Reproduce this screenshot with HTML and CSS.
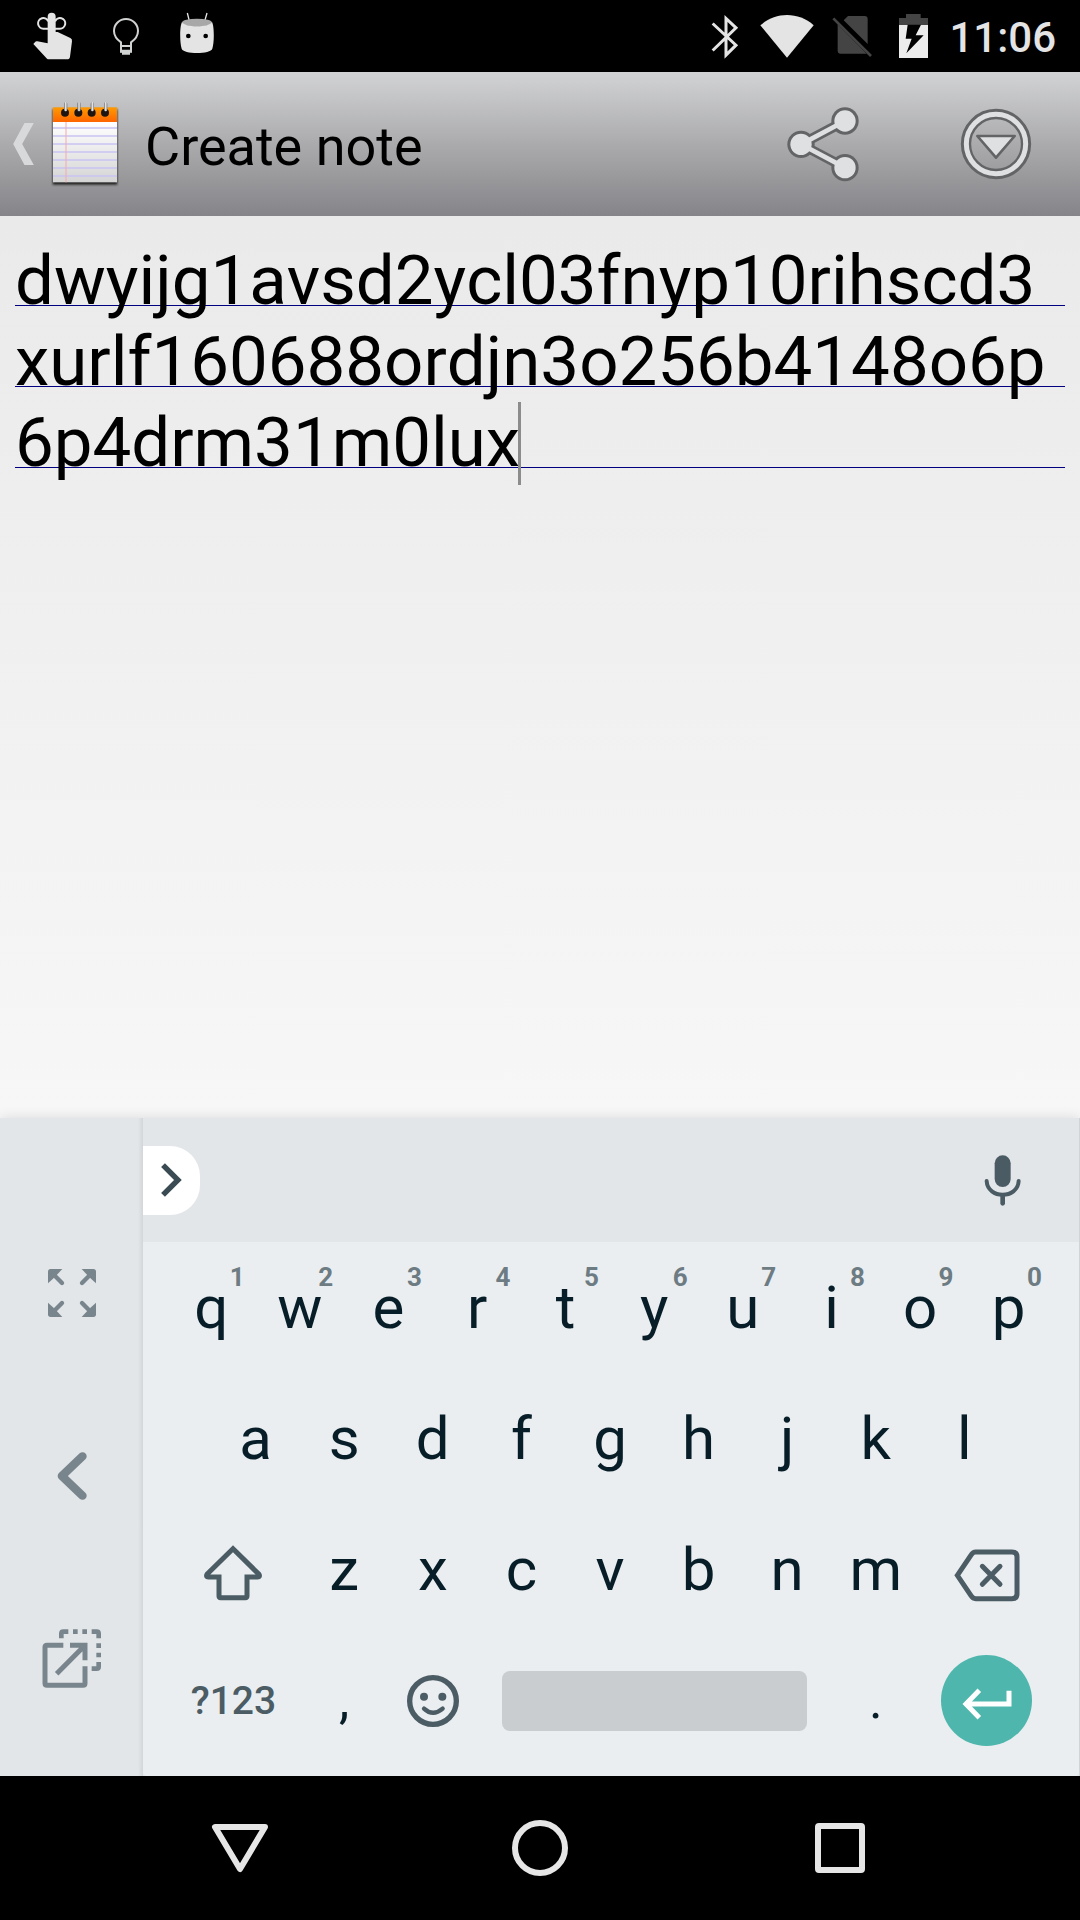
FILE: index.html
```html
<!DOCTYPE html>
<html lang="en">
<head>
<meta charset="utf-8">
<meta name="viewport" content="width=device-width, initial-scale=1">
<title>Create note</title>
<link rel="stylesheet" href="styles.css">
</head>
<body>
<div class="screen">
  <header class="status">
    <div class="status-group notices">
      <svg width="40" height="48" viewBox="0 0 120 144" aria-hidden="true"><path fill="#e4e4e4" d="M44 14a12 12 0 0 1 24 0V60h6l38 18q6 3 5 10l-6 46q-1 8-9 8H48q-4 0-6-2L1 96l6-7q2-2 6-1l31 6z"/><g fill="none" stroke="#e4e4e4" stroke-width="6"><path d="M46 50H32a16 16 0 1 1 14-22"/><path d="M66 50H80a16 16 0 1 0-14-22"/></g></svg>
      <svg width="28" height="39" viewBox="0 0 84 117" aria-hidden="true"><path fill="none" stroke="#d0d2d1" stroke-width="6" d="M27 106V76C14 67 6 55 6 42a36 36 0 0 1 72 0C78 55 70 67 57 76V106M27 87H57"/><path fill="#d0d2d1" d="M24 98H60V107H54V113H30V107H24z"/></svg>
      <svg width="36" height="42" viewBox="0 0 108 126" aria-hidden="true"><path stroke="#e4e4e4" stroke-width="4" d="M25 3l7 28M84 3l-8 28"/><ellipse cx="54" cy="32" rx="45" ry="12" fill="#a8a8a8"/><path fill="#e4e4e4" d="M9 30C2 42 2 92 8 110C12 127 96 127 100 110C106 92 106 42 99 30C94 47 14 47 9 30z"/><circle cx="28" cy="72" r="7"/><circle cx="80" cy="72" r="7"/></svg>
    </div>
    <div class="status-group system">
      <svg width="28" height="45" viewBox="0 0 84 132" aria-hidden="true"><path fill="none" stroke="#e4e4e4" stroke-width="9" d="M5 27L75 92L45 122V12L75 40L5 108"/></svg>
      <svg width="54" height="43" viewBox="0 0 160 129" aria-hidden="true"><path fill="#e4e4e4" d="M0 31C45-10 115-10 160 31L80 128z"/></svg>
      <svg width="40" height="42" viewBox="0 0 120 126" aria-hidden="true"><path fill="#444" d="M48 3H98Q107 3 107 12V87L35 16zM17 28L104 116H26Q17 116 17 107z"/><path stroke="#444" stroke-width="8" d="M4 10L117 123"/></svg>
      <svg class="battery" width="29" height="44" viewBox="0 0 87 132" aria-hidden="true"><path fill="#444" d="M21 0H65V12H87V34H0V12H21z"/><path fill="#ececec" d="M0 33H87V132H0z"/><path d="M26 32H66L50 64H74L22 118L38 74H20z"/></svg>
      <time class="clock">11:06</time>
    </div>
  </header>

  <div class="action-bar">
    <button class="up" type="button" aria-label="Back">
      <svg width="21" height="42" viewBox="0 0 62 126"><path fill="#d8d9db" d="M34 0H62L27 63L62 126H34L0 63z"/></svg>
      <svg width="68" height="88" viewBox="0 0 204 264">
        <defs>
          <linearGradient id="cover" x2="0" y2="1"><stop stop-color="#ff9a00"/><stop offset="1" stop-color="#ff6400"/></linearGradient>
          <linearGradient id="sheet" x2="0" y2="1"><stop stop-color="#fff"/><stop offset="1" stop-color="#d4d4d4"/></linearGradient>
          <linearGradient id="ring"><stop stop-color="#666"/><stop offset=".5" stop-color="#eee"/><stop offset="1" stop-color="#777"/></linearGradient>
          <filter id="soft"><feGaussianBlur stdDeviation="3"/></filter>
        </defs>
        <rect x="5" y="28" width="194" height="226" fill="#222" filter="url(#soft)"/>
        <rect x="6" y="22" width="192" height="45" fill="url(#cover)"/>
        <rect x="6" y="66" width="192" height="181" fill="url(#sheet)"/>
        <path stroke="#c8c4f4" stroke-width="5" d="M6 84H198M6 108H198M6 132H198M6 156H198M6 180H198M6 204H198M6 228H198"/>
        <path stroke="#f5a9ac" stroke-width="3" d="M45 66V247"/>
        <g fill="#1c1512"><circle cx="42" cy="38" r="12"/><circle cx="82" cy="38" r="12"/><circle cx="122" cy="38" r="12"/><circle cx="162" cy="38" r="12"/></g>
        <g fill="url(#ring)"><rect x="39" y="6" width="10" height="28" rx="5"/><rect x="79" y="6" width="10" height="28" rx="5"/><rect x="119" y="6" width="10" height="28" rx="5"/><rect x="159" y="6" width="10" height="28" rx="5"/></g>
      </svg>
    </button>
    <h1 class="title">Create note</h1>
    <button class="action" type="button" aria-label="Share">
      <svg width="72" height="77" viewBox="0 0 216 231"><g stroke="#636466" fill="#636466"><path fill="none" stroke-width="30" d="M174 45L42 115L174 185"/><circle cx="42" cy="115" r="41" stroke="none"/><circle cx="174" cy="45" r="41" stroke="none"/><circle cx="174" cy="185" r="41" stroke="none"/></g><g stroke="#dfe0e1" fill="#dfe0e1"><path fill="none" stroke-width="14" d="M174 45L42 115L174 185"/><circle cx="42" cy="115" r="32" stroke="none"/><circle cx="174" cy="45" r="32" stroke="none"/><circle cx="174" cy="185" r="32" stroke="none"/></g></svg>
    </button>
    <button class="action" type="button" aria-label="More options">
      <svg width="72" height="72" viewBox="0 0 216 216"><circle cx="108" cy="108" r="90" fill="none" stroke="#636466" stroke-width="31"/><circle cx="108" cy="108" r="89" fill="none" stroke="#dfe0e1" stroke-width="15"/><path fill="#dfe0e1" stroke="#636466" stroke-width="8" stroke-linejoin="round" d="M52 84H164L108 149z"/></svg>
    </button>
  </div>

  <main class="note">
    <textarea class="note-text" rows="3" aria-label="Note text" spellcheck="false">dwyijg1avsd2ycl03fnyp10rihscd3xurlf160688ordjn3o256b4148o6p6p4drm31m0lux</textarea>
    <span class="caret" aria-hidden="true"></span>
  </main>

  <section class="keyboard" aria-label="Keyboard">
    <div class="side">
      <button class="side-key" type="button" aria-label="Full width">
        <svg width="48" height="48" viewBox="0 0 144 144"><defs><g id="corner"><path fill="#78858c" d="M0 43V8Q0 0 8 0H43L29 15L15 29z"/><path stroke="#78858c" stroke-width="13" stroke-linecap="round" d="M16 16L42 42"/></g></defs><use href="#corner"/><use href="#corner" transform="rotate(90 72 72)"/><use href="#corner" transform="rotate(180 72 72)"/><use href="#corner" transform="rotate(270 72 72)"/></svg>
      </button>
      <button class="side-key" type="button" aria-label="Move left">
        <svg width="30" height="48" viewBox="0 0 87 144"><path fill="none" stroke="#78858c" stroke-width="25" stroke-linecap="round" stroke-linejoin="round" d="M75 13L13 72L75 131"/></svg>
      </button>
      <button class="side-key" type="button" aria-label="Float keyboard">
        <svg width="60" height="60" viewBox="0 0 180 180"><g fill="none" stroke="#78858c" stroke-width="15"><path d="M64 49H15Q9 49 9 55V163Q9 169 15 169H123Q129 169 129 163V112M84 49H129V94M129 49L44 134"/><path stroke-width="14" d="M58 28V14Q58 8 64 8H79M93 8H107M121 8H135M149 8H164Q170 8 170 14V28M170 43V57M170 71V85M170 99V113Q170 119 164 119H149"/></g></svg>
      </button>
    </div>
    <div class="board">
      <div class="strip">
        <button class="expand" type="button" aria-label="More tools"><svg width="21" height="34" viewBox="0 0 62 100"><path fill="none" stroke="#3b4b54" stroke-width="16" d="M6 6L50 50L6 94"/></svg></button>
        <button class="mic" type="button" aria-label="Voice input"><svg width="38" height="51" viewBox="0 0 112 153"><rect x="31" y="1" width="48" height="95" rx="24" fill="#4b5b63"/><path fill="none" stroke="#4b5b63" stroke-width="12" stroke-linecap="round" d="M7 78C10 133 100 133 103 78"/><path stroke="#4b5b63" stroke-width="14" stroke-linecap="round" d="M55 122V145"/></svg></button>
      </div>
      <div class="rows">
        <div class="row">
          <button class="key" type="button">q<span class="hint">1</span></button>
          <button class="key" type="button">w<span class="hint">2</span></button>
          <button class="key" type="button">e<span class="hint">3</span></button>
          <button class="key" type="button">r<span class="hint">4</span></button>
          <button class="key" type="button">t<span class="hint">5</span></button>
          <button class="key" type="button">y<span class="hint">6</span></button>
          <button class="key" type="button">u<span class="hint">7</span></button>
          <button class="key" type="button">i<span class="hint">8</span></button>
          <button class="key" type="button">o<span class="hint">9</span></button>
          <button class="key" type="button">p<span class="hint">0</span></button>
        </div>
        <div class="row">
          <button class="key indent" type="button">a</button>
          <button class="key" type="button">s</button>
          <button class="key" type="button">d</button>
          <button class="key" type="button">f</button>
          <button class="key" type="button">g</button>
          <button class="key" type="button">h</button>
          <button class="key" type="button">j</button>
          <button class="key" type="button">k</button>
          <button class="key" type="button">l</button>
        </div>
        <div class="row">
          <button class="key wide shift" type="button" aria-label="Shift"><svg width="60" height="57" viewBox="0 0 180 171"><path fill="none" stroke="#4b5c64" stroke-width="15" d="M90 14L12 91Q8 99 16 99H48V156Q48 161 53 161H127Q132 161 132 156V99H164Q172 99 168 91z"/></svg></button>
          <button class="key" type="button">z</button>
          <button class="key" type="button">x</button>
          <button class="key" type="button">c</button>
          <button class="key" type="button">v</button>
          <button class="key" type="button">b</button>
          <button class="key" type="button">n</button>
          <button class="key" type="button">m</button>
          <button class="key wide delete" type="button" aria-label="Delete"><svg width="66" height="53" viewBox="0 0 198 159"><path fill="none" stroke="#4b5c64" stroke-width="15" d="M10 79L52 17Q57 9 65 9H174Q189 9 189 23V135Q189 149 174 149H65Q57 149 52 141z"/><path stroke="#4b5c64" stroke-width="15" stroke-linecap="round" d="M85 52L138 106M138 52L85 106"/></svg></button>
        </div>
        <div class="row">
          <button class="key wide symbols" type="button">?123</button>
          <button class="key punct" type="button">,</button>
          <button class="key" type="button" aria-label="Emoji"><svg width="52" height="52" viewBox="0 0 156 156"><circle cx="78" cy="78" r="70" fill="none" stroke="#4b5c64" stroke-width="16"/><circle cx="51" cy="65" r="12" fill="#4b5c64"/><circle cx="106" cy="65" r="12" fill="#4b5c64"/><path fill="none" stroke="#4b5c64" stroke-width="13" stroke-linecap="round" d="M51 101Q78 126 107 101"/></svg></button>
          <button class="key space" type="button" aria-label="Space"><span class="space-bar"></span></button>
          <button class="key punct" type="button">.</button>
          <button class="key wide" type="button" aria-label="Enter"><span class="enter"><svg width="50" height="32" viewBox="0 0 150 96"><path fill="none" stroke="#fff" stroke-width="15" d="M52 7L12 48L52 89M12 48H141V8"/></svg></span></button>
        </div>
      </div>
    </div>
  </section>

  <nav class="nav" aria-label="System">
    <button class="nav-key" type="button" aria-label="Back"><svg width="60" height="60" viewBox="0 0 60 60"><path fill="none" stroke="#e6e6e6" stroke-width="6" stroke-linejoin="round" d="M5 9H55L30 51z"/></svg></button>
    <button class="nav-key" type="button" aria-label="Home"><svg width="60" height="60" viewBox="0 0 60 60"><circle cx="30" cy="30" r="25" fill="none" stroke="#e6e6e6" stroke-width="6"/></svg></button>
    <button class="nav-key" type="button" aria-label="Recent apps"><svg width="60" height="60" viewBox="0 0 60 60"><rect x="8" y="8" width="44" height="44" rx="1" fill="none" stroke="#e6e6e6" stroke-width="6" stroke-linejoin="round"/></svg></button>
  </nav>
</div>
</body>
</html>
```

FILE: styles.css
```css
* {
  box-sizing: border-box;
}

body {
  margin: 0;
  font-family: Roboto, "Liberation Sans", sans-serif;
  background: #000;
  color: #000;
}

button {
  margin: 0;
  padding: 0;
  border: 0;
  background: none;
  color: inherit;
  font: inherit;
}

svg {
  display: block;
  flex: none;
}

.screen {
  display: flex;
  flex-direction: column;
  min-height: 100vh;
}

/* Status bar */
.status {
  display: flex;
  justify-content: space-between;
  height: 72px;
  padding: 0 24px 0 33px;
  background: #000;
  color: #e4e4e4;
}

.status-group {
  display: flex;
  align-items: center;
}

.notices {
  gap: 39px;
}

.notices svg:last-child {
  margin-bottom: 6px;
}

.system {
  gap: 21px;
}

.system svg:nth-child(2) {
  margin-right: -3px;
}

.battery {
  margin-left: 6px;
}

.clock {
  padding-top: 3px;
  font-size: 42px;
  font-weight: 500;
  line-height: 48px;
}

/* Action bar */
.action-bar {
  display: flex;
  align-items: center;
  gap: 5px;
  height: 144px;
  background: linear-gradient(#d2d3d4, #ababad 50%, #858489);
}

.up {
  display: flex;
  align-items: center;
  gap: 17px;
  padding-left: 13px;
}

.title {
  flex: 1;
  margin: 0;
  padding: 5px 0 0 21px;
  font-size: 54px;
  font-weight: 400;
  line-height: 64px;
}

.action {
  display: flex;
  align-items: center;
  justify-content: center;
  width: 168px;
  height: 144px;
}

/* Note */
.note {
  position: relative;
  flex: 1;
  padding: 24px 15px;
  background: linear-gradient(#eaeaea, #f7f7f7);
}

.note-text {
  display: block;
  width: 100%;
  height: 243px;
  padding: 0;
  border: 0;
  outline: 0;
  resize: none;
  overflow: hidden;
  background: linear-gradient(transparent 65px, #000080 65px, #000080 66px, transparent 66px) 0 0 / 100% 81px;
  color: #000;
  caret-color: transparent;
  font: 400 69px/81px Roboto, "Liberation Sans", sans-serif;
  font-kerning: none;
  word-break: break-all;
}

.caret {
  position: absolute;
  top: 186px;
  left: 518px;
  width: 3px;
  height: 83px;
  background: #8c8c8c;
}

/* Keyboard */
.keyboard {
  position: relative;
  display: flex;
  background: #e2e6e9;
  box-shadow: 0 0 12px rgba(0, 0, 0, 0.12);
}

.side {
  width: 143px;
  padding-top: 83px;
  background: linear-gradient(to left, #d2d6d9, #e2e6e9 5px);
}

.side-key {
  display: flex;
  align-items: center;
  justify-content: center;
  width: 100%;
  height: 183px;
}

.board {
  flex: 1;
  border-right: 1px solid #d0d4d7;
}

.strip {
  display: flex;
  align-items: center;
  justify-content: space-between;
  height: 124px;
  background: #e2e6e9;
}

.expand {
  display: flex;
  align-items: center;
  justify-content: center;
  width: 57px;
  height: 69px;
  border-radius: 0 30px 30px 0;
  background: #fff;
}

.mic {
  display: flex;
  align-items: center;
  justify-content: center;
  width: 152px;
  height: 124px;
}

.rows {
  padding: 0 26px 10px 24px;
  border-radius: 0 0 4px 4px;
  background: #eaeef1;
}

.row {
  display: grid;
  grid-template-columns: repeat(20, 1fr);
  height: 131px;
}

.key {
  position: relative;
  display: flex;
  grid-column: span 2;
  align-items: center;
  justify-content: center;
  min-width: 0;
  color: #071e28;
  font-size: 60px;
  line-height: 70px;
}

.indent {
  grid-column: 2 / span 2;
}

.wide {
  grid-column: span 3;
}

.shift {
  padding-top: 6px;
}

.delete {
  padding-top: 12px;
}

.symbols {
  color: #4b5c64;
  font-size: 39px;
  font-weight: 500;
}

.punct {
  font-size: 52px;
}

.hint {
  position: absolute;
  top: 20px;
  right: 11px;
  color: #6d7b82;
  font-size: 26px;
  font-weight: 700;
  line-height: 30px;
}

.space {
  grid-column: span 8;
  padding: 0 25px;
}

.space-bar {
  width: 100%;
  height: 60px;
  border-radius: 8px;
  background: #c9cdd0;
}

.enter {
  display: flex;
  align-items: center;
  justify-content: center;
  width: 91px;
  height: 91px;
  padding-top: 6px;
  border-radius: 50%;
  background: #4eb6ac;
}

/* Navigation bar */
.nav {
  display: flex;
  justify-content: center;
  height: 144px;
  padding: 0 90px;
  background: #000;
}

.nav-key {
  display: flex;
  flex: 1;
  align-items: center;
  justify-content: center;
}
```
